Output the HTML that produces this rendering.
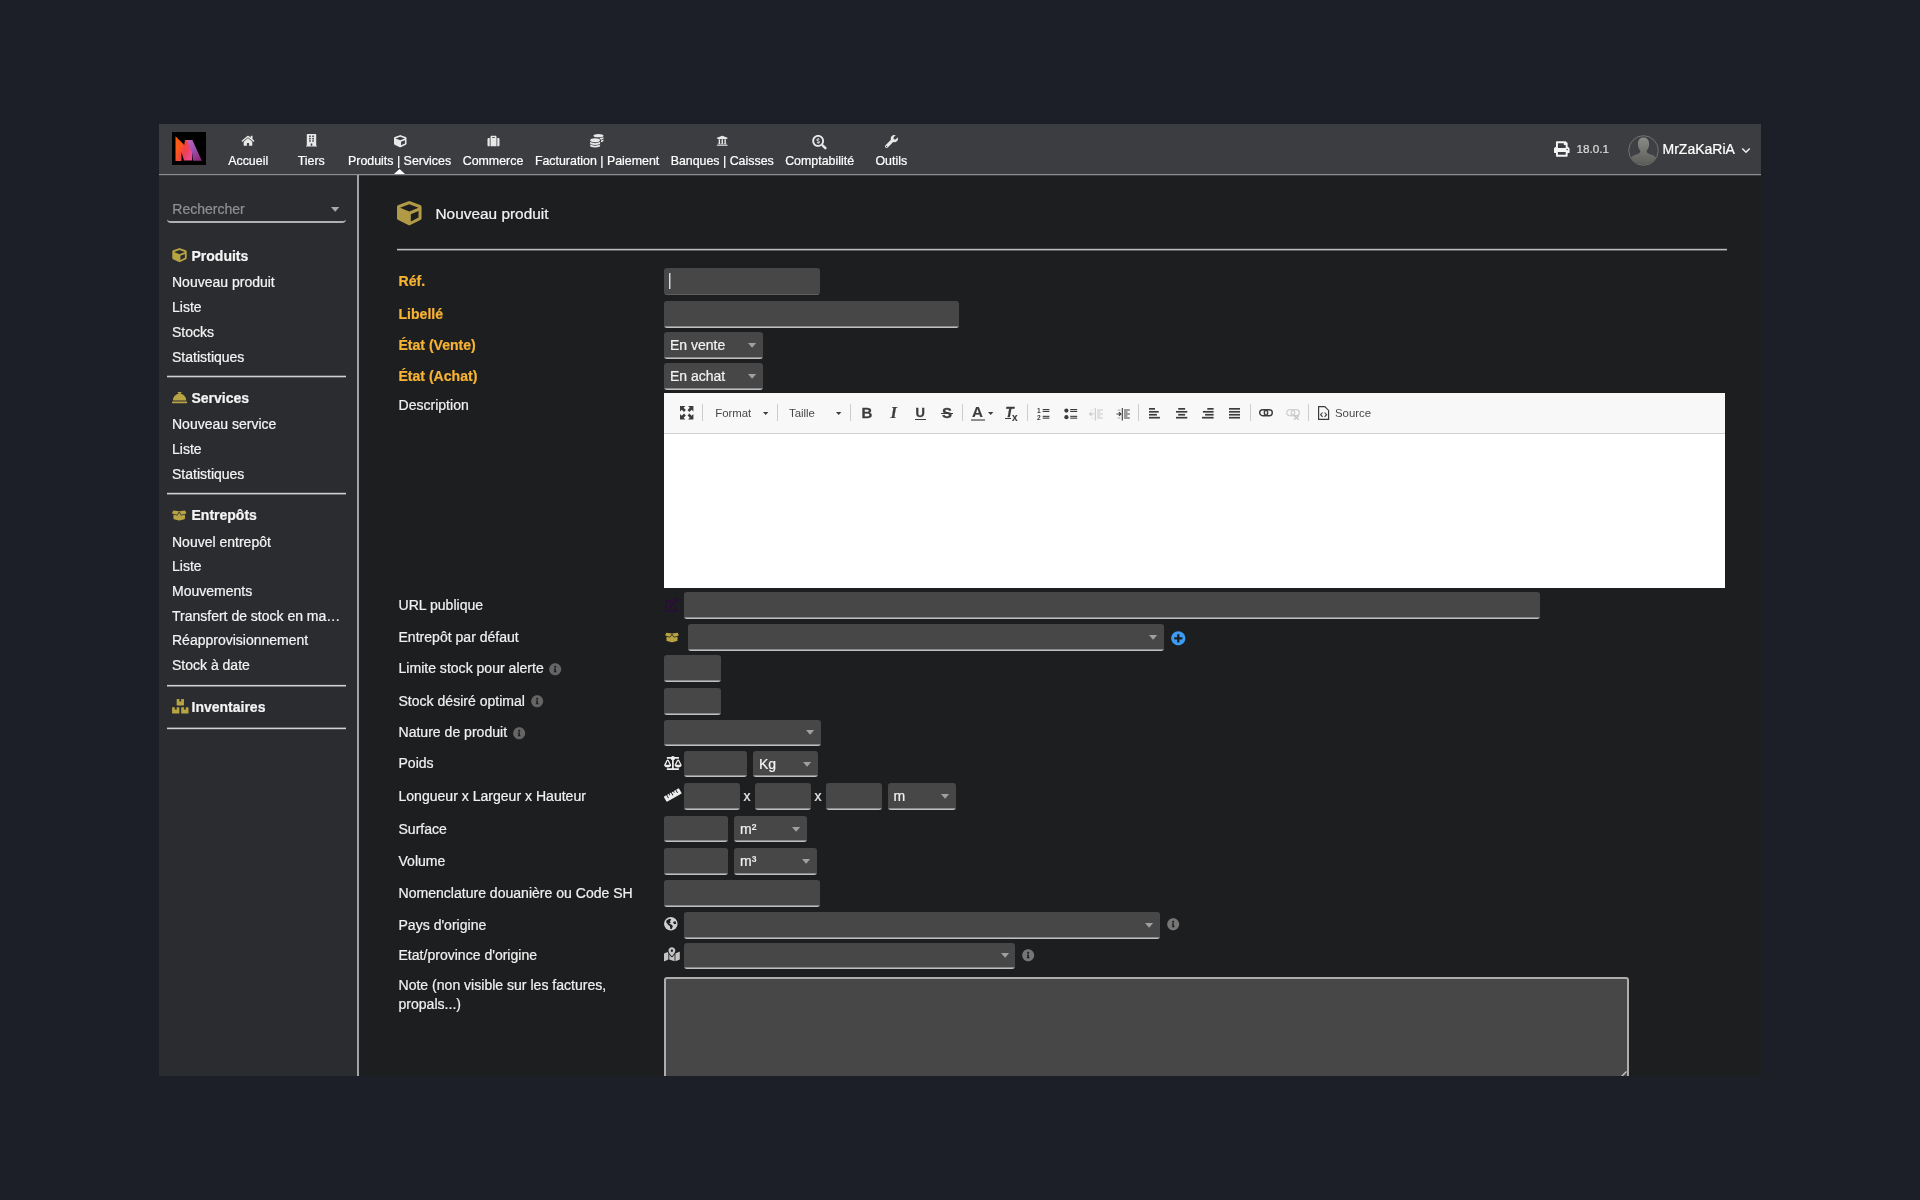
<!DOCTYPE html>
<html lang="fr"><head><meta charset="utf-8"><title>Nouveau produit</title>
<style>
*{box-sizing:border-box;margin:0;padding:0}
html,body{width:1920px;height:1200px;overflow:hidden}
body{background:#1c1e28;font-family:"Liberation Sans",Arial,sans-serif;font-size:14px;color:#f0f0f0;position:relative;-webkit-text-stroke:0.22px currentColor}
.abs{position:absolute}
svg{display:block;overflow:visible}
#frame{position:absolute;left:159px;top:124px;width:1602px;height:952px;background:#1d1e20;overflow:hidden}
#wrap{position:absolute;left:-159px;top:-124px;width:1920px;height:1200px;will-change:transform}
#topbar{position:absolute;left:159px;top:124px;width:1602px;height:50px;background:#3c3d40}
#topline{position:absolute;left:159px;top:174px;width:1602px;height:2px;background:linear-gradient(#8d8e90 0,#8d8e90 50%,#3c3d40 50%,#3c3d40 100%)}
#side{position:absolute;left:159px;top:176px;width:198px;height:900px;background:#2b2c30}
#sideline{position:absolute;left:357px;top:175px;width:2px;height:901px;background:#a3a4a7}
.nav{position:absolute;top:154px;font-size:12.4px;color:#fff;white-space:nowrap;transform:translateX(-50%);line-height:14px}
.t{position:absolute;white-space:nowrap;line-height:16px}
.sl{left:172px;color:#f4f4f4}
.sh{left:191.5px;font-weight:bold;color:#f4f4f4}
.hr{position:absolute;left:167px;width:179px;height:2px;background:#c4c5c7}
.lb{left:398.5px;color:#f0f0f0;font-size:14.05px}
.req{color:#f7b334;font-weight:bold}
.in{position:absolute;background:linear-gradient(to top,#c0c0c0 0,#c0c0c0 1px,#8a8a8a 1px,#8a8a8a 2px,#474747 2px);border-radius:3px}
.sel{position:absolute;background:linear-gradient(to top,#c0c0c0 0,#c0c0c0 1px,#8a8a8a 1px,#8a8a8a 2px,#474747 2px);border-radius:3px;font-size:14px;line-height:16px;color:#f2f2f2;white-space:nowrap}
.sel span{position:absolute;left:6px;top:5px}
.car{position:absolute;width:0;height:0;border-left:4.6px solid transparent;border-right:4.6px solid transparent;border-top:5px solid #a9a9a9}
.ck{-webkit-text-stroke:0;position:absolute;font-size:11.4px;color:#484848;line-height:14px;white-space:nowrap}
.sep{position:absolute;top:404px;width:1px;height:17px;background:#cdcdcd}
</style></head><body>
<div id="frame"><div id="wrap">
<div id="topbar"></div><div id="side"></div><div id="topline"></div><div id="sideline"></div>
<svg class="abs" style="left:172px;top:132px" width="34" height="33" viewBox="0 0 34 33"><defs><linearGradient id="lg1" gradientUnits="userSpaceOnUse" x1="7" y1="12" x2="20" y2="17"><stop offset="0" stop-color="#ff5a14"/><stop offset="0.45" stop-color="#f2443e"/><stop offset="0.75" stop-color="#ee3e68"/><stop offset="1" stop-color="#ea4c86"/></linearGradient><linearGradient id="lg3" gradientUnits="userSpaceOnUse" x1="15" y1="8" x2="27" y2="28"><stop offset="0" stop-color="#c662b6"/><stop offset="0.45" stop-color="#9a56b2"/><stop offset="1" stop-color="#922a80"/></linearGradient></defs><rect width="34" height="33" fill="#000"/><path d="M3.5 4.25 L12.25 13.0 L13.0 8.0 L16.0 8.0 L20.12 19.5 L20.05 28.55 L12.0 28.55 L9.5 20.0 L9.5 28.88 L3.5 28.88Z" fill="url(#lg1)"/><path d="M14.5 8.0 L20.38 8.0 L29.75 28.75 L21.05 28.75 L20.05 20.62Z" fill="url(#lg3)"/></svg>
<svg class="abs" style="left:241px;top:134.5px" width="14" height="11.5" viewBox="0 0 576 512" ><path fill="#e8e8e8" d="M280.37 148.26L96 300.11V464a16 16 0 0 0 16 16l112.06-.29a16 16 0 0 0 15.92-16V368a16 16 0 0 1 16-16h64a16 16 0 0 1 16 16v95.64a16 16 0 0 0 16 16.05L464 480a16 16 0 0 0 16-16V300L295.67 148.26a12.19 12.19 0 0 0-15.3 0zM571.6 251.47L488 182.56V44.05a12 12 0 0 0-12-12h-56a12 12 0 0 0-12 12v72.61L318.47 43a48 48 0 0 0-61 0L4.34 251.47a12 12 0 0 0-1.6 16.9l25.5 31A12 12 0 0 0 45.15 301l235.22-193.74a12.19 12.19 0 0 1 15.3 0L530.9 301a12 12 0 0 0 16.9-1.6l25.5-31a12 12 0 0 0-1.7-16.93z"/></svg>
<div class="nav" style="left:248.2px">Accueil</div>
<svg class="abs" style="left:305.8px;top:134.2px" width="11" height="12.6" viewBox="0 0 448 512" ><path fill="#e8e8e8" d="M436 480h-20V24c0-13.255-10.745-24-24-24H56C42.745 0 32 10.745 32 24v456H12c-6.627 0-12 5.373-12 12v20h448v-20c0-6.627-5.373-12-12-12zM128 76c0-6.627 5.373-12 12-12h40c6.627 0 12 5.373 12 12v40c0 6.627-5.373 12-12 12h-40c-6.627 0-12-5.373-12-12V76zm0 96c0-6.627 5.373-12 12-12h40c6.627 0 12 5.373 12 12v40c0 6.627-5.373 12-12 12h-40c-6.627 0-12-5.373-12-12v-40zm52 148h-40c-6.627 0-12-5.373-12-12v-40c0-6.627 5.373-12 12-12h40c6.627 0 12 5.373 12 12v40c0 6.627-5.373 12-12 12zm76 160h-64v-84c0-6.627 5.373-12 12-12h40c6.627 0 12 5.373 12 12v84zm64-172c0 6.627-5.373 12-12 12h-40c-6.627 0-12-5.373-12-12v-40c0-6.627 5.373-12 12-12h40c6.627 0 12 5.373 12 12v40zm0-96c0 6.627-5.373 12-12 12h-40c-6.627 0-12-5.373-12-12v-40c0-6.627 5.373-12 12-12h40c6.627 0 12 5.373 12 12v40zm0-96c0 6.627-5.373 12-12 12h-40c-6.627 0-12-5.373-12-12V76c0-6.627 5.373-12 12-12h40c6.627 0 12 5.373 12 12v40z"/></svg>
<div class="nav" style="left:311.2px">Tiers</div>
<svg class="abs" style="left:393.5px;top:134.5px" width="12.5" height="12.5" viewBox="0 0 512 512" ><path fill="#e8e8e8" d="M239.1 6.3l-208 78c-18.700 7-31.100 25-31.100 45v225.100c0 18.200 10.300 34.800 26.500 42.900l208 104c13.500 6.800 29.400 6.800 42.900 0l208-104c16.300-8.100 26.500-24.800 26.500-42.900V129.300c0-20-12.400-37.900-31.100-44.900l-208-78C262 2.200 250 2.200 239.100 6.300zM256 68.400l192 72v1.100l-192 78-192-78v-1.100l192-72zm32 356V275.500l160-65v133.900l-160 80z"/></svg>
<div class="nav" style="left:399.6px">Produits | Services</div>
<svg class="abs" style="left:486.6px;top:134.6px" width="13" height="12" viewBox="0 0 512 512" ><path fill="#e8e8e8" d="M128 480h256V80c0-26.500-21.500-48-48-48H176c-26.500 0-48 21.500-48 48v400zm64-384h128v32H192V96zm320 80v256c0 26.500-21.500 48-48 48h-48V128h48c26.500 0 48 21.500 48 48zM96 480H48c-26.500 0-48-21.500-48-48V176c0-26.500 21.500-48 48-48h48v352z"/></svg>
<div class="nav" style="left:493px">Commerce</div>
<svg class="abs" style="left:590.3px;top:133.8px" width="13.6" height="13.4" viewBox="0 0 512 512" ><path fill="#e8e8e8" d="M0 405.300V448c0 35.300 86 64 192 64s192-28.700 192-64v-42.700C342.700 434.400 267.200 448 192 448S41.300 434.400 0 405.300zM320 128c106 0 192-28.700 192-64S426 0 320 0 128 28.700 128 64s86 64 192 64zM0 300.400V352c0 35.300 86 64 192 64s192-28.700 192-64v-51.600c-41.300 34-116.900 51.600-192 51.600S41.300 334.400 0 300.400zm416 11c57.300-11.100 96-31.700 96-55.400v-42.700c-23.200 16.400-57.300 27.600-96 34.500v63.600zM192 160C86 160 0 195.800 0 240s86 80 192 80 192-35.800 192-80-86-80-192-80zm219.300 56.300c60-10.800 100.700-32 100.700-56.300v-42.700c-35.500 25.100-96.500 38.600-160.700 41.800 29.500 14.300 51.200 33.500 60 57.200z"/></svg>
<div class="nav" style="left:597.1px">Facturation | Paiement</div>
<svg class="abs" style="left:716px;top:135px" width="12.5" height="11.5" viewBox="0 0 512 512" ><path fill="#e8e8e8" d="M496 128v16a8 8 0 0 1-8 8h-24v12c0 6.627-5.373 12-12 12H60c-6.627 0-12-5.373-12-12v-12H24a8 8 0 0 1-8-8v-16a8 8 0 0 1 4.941-7.392l232-88a7.996 7.996 0 0 1 6.118 0l232 88A8 8 0 0 1 496 128zm-24 304H40c-13.255 0-24 10.745-24 24v16a8 8 0 0 0 8 8h464a8 8 0 0 0 8-8v-16c0-13.255-10.745-24-24-24zM96 192v192H60c-6.627 0-12 5.373-12 12v20h416v-20c0-6.627-5.373-12-12-12h-36V192h-64v192h-64V192h-64v192h-64V192H96z"/></svg>
<div class="nav" style="left:722.2px">Banques | Caisses</div>
<svg class="abs" style="left:811.7px;top:134.6px" width="15" height="14.5" viewBox="0 0 512 512" ><path fill="#e8e8e8" d="M505.040 442.660l-99.710-99.690c-4.500-4.500-10.600-7-17-7h-16.300c27.600-35.300 44-79.690 44-127.990C416.030 93.090 322.920 0 208.020 0S0 93.090 0 207.980s93.110 207.980 208.020 207.980c48.300 0 92.710-16.400 128.010-44v16.300c0 6.400 2.500 12.500 7 17l99.710 99.690c9.400 9.400 24.600 9.400 33.900 0l28.300-28.300c9.400-9.400 9.400-24.590.1-33.990zm-297.020-90.700c-79.540 0-144-64.340-144-143.980 0-79.530 64.350-143.980 144-143.980 79.540 0 144 64.340 144 143.980 0 79.530-64.350 143.980-144 143.980zm27.110-152.540l-45.010-13.500c-5.160-1.550-8.770-6.780-8.770-12.730 0-7.270 5.300-13.190 11.800-13.190h28.110c4.560 0 8.960 1.290 12.820 3.720 3.240 2.030 7.360 1.910 10.130-.73l11.750-11.210c3.530-3.370 3.330-9.210-.57-12.140-9.100-6.830-20.080-10.770-31.370-11.350V112c0-4.420-3.580-8-8-8h-16c-4.420 0-8 3.580-8 8v16.120c-23.630.63-42.680 20.550-42.680 45.070 0 19.970 12.990 37.810 31.580 43.390l45.010 13.500c5.160 1.550 8.770 6.780 8.770 12.730 0 7.270-5.300 13.190-11.800 13.190h-28.100c-4.560 0-8.960-1.290-12.820-3.720-3.240-2.030-7.360-1.910-10.130.73l-11.750 11.210c-3.530 3.370-3.330 9.210.57 12.140 9.100 6.830 20.080 10.770 31.370 11.350V304c0 4.420 3.580 8 8 8h16c4.420 0 8-3.580 8-8v-16.120c23.630-.63 42.680-20.540 42.680-45.070 0-19.970-12.990-37.810-31.590-43.390z"/></svg>
<div class="nav" style="left:819.6px">Comptabilité</div>
<svg class="abs" style="left:884.8px;top:134.5px" width="13" height="13" viewBox="0 0 512 512" ><path fill="#e8e8e8" d="M507.730 109.100c-2.240-9.030-13.540-12.090-20.120-5.510l-74.360 74.360-67.880-11.310-11.310-67.880 74.360-74.360c6.620-6.620 3.430-17.900-5.660-20.160-47.380-11.740-99.550.91-136.580 37.930-39.640 39.640-50.550 97.100-34.050 147.200L18.740 402.760c-24.990 24.990-24.990 65.510 0 90.500 24.990 24.990 65.510 24.990 90.500 0l213.210-213.210c50.120 16.710 107.470 5.680 147.370-34.220 37.070-37.070 49.700-89.320 37.910-136.730zM64 472c-13.250 0-24-10.750-24-24 0-13.260 10.750-24 24-24s24 10.740 24 24c0 13.250-10.750 24-24 24z"/></svg>
<div class="nav" style="left:891.3px">Outils</div>
<svg class="abs" style="left:394px;top:169px" width="11" height="5" viewBox="0 0 11 5"><path d="M0 5 L5.5 0 L11 5 Z" fill="#fff"/></svg>
<svg class="abs" style="left:1553.8px;top:141px" width="15.6" height="16" viewBox="0 0 512 512" ><path fill="#f4f4f4" d="M448 192V77.250c0-8.490-3.370-16.620-9.370-22.630L393.370 9.370c-6-6-14.140-9.370-22.630-9.370H96C78.330 0 64 14.330 64 32v160c-35.350 0-64 28.650-64 64v112c0 8.840 7.160 16 16 16h48v96c0 17.670 14.330 32 32 32h320c17.670 0 32-14.330 32-32v-96h48c8.840 0 16-7.160 16-16V256c0-35.350-28.650-64-64-64zm-64 256H128v-96h256v96zm0-224H128V64h192v48c0 8.840 7.160 16 16 16h48v96zm48 72c-13.250 0-24-10.750-24-24 0-13.260 10.750-24 24-24s24 10.740 24 24c0 13.250-10.750 24-24 24z"/></svg>
<div class="t" style="left:1576.5px;top:141px;font-size:11.7px;color:#dcdcdc">18.0.1</div>
<svg class="abs" style="left:1628px;top:134.5px" width="31" height="31" viewBox="0 0 31 31"><defs><linearGradient id="av" x1="0" y1="0" x2="0" y2="1"><stop offset="0" stop-color="#8a8a86"/><stop offset="1" stop-color="#5a5a56"/></linearGradient><clipPath id="avc"><circle cx="15.5" cy="15.500" r="14.200"/></clipPath></defs><circle cx="15.5" cy="15.500" r="14.800" fill="#3f4043" stroke="#77787a" stroke-width="0.9"/><g clip-path="url(#avc)"><path d="M15.5 2.500c3.600 0 5.600 2.700 5.600 6.400 0 2.600-.9 5-2.300 6.300-.3 1.800.3 2.800 2 3.500l4.500 1.700c2 .8 3.200 2.300 3.600 4.600l.4 6h-27.600l.4-6c.4-2.300 1.600-3.800 3.600-4.600l4.500-1.700c1.700-.7 2.300-1.700 2-3.500-1.400-1.300-2.300-3.700-2.300-6.300 0-3.700 2-6.400 5.600-6.400z" fill="url(#av)"/></g></svg>
<div class="t" style="left:1662.5px;top:141px;color:#fff">MrZaKaRiA</div>
<svg class="abs" style="left:1741px;top:146.500px" width="10" height="7" viewBox="0 0 10 7"><path d="M1.300 1.500 L5 5.200 L8.700 1.500" fill="none" stroke="#f0f0f0" stroke-width="1.500"/></svg>
<div class="t" style="left:172.3px;top:201px;color:#8f9092">Rechercher</div>
<div class="abs" style="left:167px;top:196px;width:179px;height:27px;border-bottom:2px solid #aeb0b3;border-radius:0 0 4px 4px"></div>
<svg class="abs" style="left:331.2px;top:207.200px" width="8.400" height="4.800" viewBox="0 0 8.400 4.800"><path d="M0 0H8.400L4.200 4.800Z" fill="#a8a9ab"/></svg>
<svg class="abs" style="left:172px;top:248px" width="15" height="14.4" viewBox="0 0 512 512" ><path fill="#b9a443" d="M239.1 6.3l-208 78c-18.700 7-31.100 25-31.100 45v225.100c0 18.200 10.300 34.800 26.500 42.900l208 104c13.500 6.800 29.400 6.800 42.900 0l208-104c16.300-8.100 26.500-24.800 26.500-42.900V129.300c0-20-12.400-37.900-31.100-44.900l-208-78C262 2.200 250 2.200 239.100 6.300zM256 68.400l192 72v1.100l-192 78-192-78v-1.100l192-72zm32 356V275.500l160-65v133.900l-160 80z"/></svg>
<svg class="abs" style="left:172px;top:389.5px" width="15.2" height="15.2" viewBox="0 0 512 512" ><path fill="#b9a443" d="M288 130.540V112h16c8.840 0 16-7.160 16-16V80c0-8.840-7.160-16-16-16h-96c-8.840 0-16 7.160-16 16v16c0 8.840 7.160 16 16 16h16v18.540C115.490 146.110 32 239.180 32 352h448c0-112.820-83.490-205.890-192-221.460zM496 384H16c-8.840 0-16 7.160-16 16v32c0 8.840 7.160 16 16 16h480c8.840 0 16-7.160 16-16v-32c0-8.840-7.160-16-16-16z"/></svg>
<svg class="abs" style="left:172px;top:509.2px" width="14.4" height="13" viewBox="0 0 640 512" ><path fill="#b9a443" d="M425.700 256c-16.900 0-32.800-9-41.400-23.400L320 126l-64.200 106.600c-8.700 14.500-24.600 23.500-41.500 23.500-4.500 0-9-.6-13.300-1.900L64 215v178c0 14.700 10 27.500 24.200 31l216.200 54.100c10.200 2.500 20.900 2.500 31 0L551.800 424c14.200-3.600 24.200-16.400 24.200-31V215l-137 39.100c-4.300 1.300-8.800 1.900-13.300 1.900zm212.600-112.200L586.800 41c-3.100-6.200-9.800-9.800-16.700-8.900L320 64l91.700 152.100c3.800 6.300 11.400 9.300 18.500 7.300l197.900-56.500c9.900-2.900 14.700-13.900 10.200-23.100zM53.200 41L1.700 143.800c-4.600 9.200.3 20.200 10.100 23l197.900 56.500c7.100 2 14.700-1 18.500-7.300L320 64 69.800 32.100c-6.900-.8-13.500 2.700-16.600 8.900z"/></svg>
<svg class="abs" style="left:171.8px;top:699px" width="16.6" height="14.6" viewBox="0 0 576 512" ><path fill="#b9a443" d="M560 288h-80v96l-32-21.300-32 21.300v-96h-80c-8.800 0-16 7.200-16 16v192c0 8.800 7.200 16 16 16h224c8.800 0 16-7.200 16-16V304c0-8.800-7.200-16-16-16zm-384-64h224c8.800 0 16-7.200 16-16V16c0-8.800-7.200-16-16-16h-80v96l-32-21.300L256 96V0h-80c-8.800 0-16 7.200-16 16v192c0 8.800 7.200 16 16 16zm64 64h-80v96l-32-21.300L96 384v-96H16c-8.800 0-16 7.200-16 16v192c0 8.800 7.200 16 16 16h224c8.800 0 16-7.200 16-16V304c0-8.800-7.200-16-16-16z"/></svg>
<div class="t sh" style="top:248px">Produits</div>
<div class="t sh" style="top:390px">Services</div>
<div class="t sh" style="top:507px">Entrepôts</div>
<div class="t sh" style="top:699px">Inventaires</div>
<div class="t sl" style="top:274px">Nouveau produit</div>
<div class="t sl" style="top:299px">Liste</div>
<div class="t sl" style="top:324px">Stocks</div>
<div class="t sl" style="top:349px">Statistiques</div>
<div class="t sl" style="top:416px">Nouveau service</div>
<div class="t sl" style="top:441px">Liste</div>
<div class="t sl" style="top:466px">Statistiques</div>
<div class="t sl" style="top:534px">Nouvel entrepôt</div>
<div class="t sl" style="top:558px">Liste</div>
<div class="t sl" style="top:583px">Mouvements</div>
<div class="t sl" style="top:608px">Transfert de stock en ma…</div>
<div class="t sl" style="top:632px">Réapprovisionnement</div>
<div class="t sl" style="top:657px">Stock à date</div>
<div class="abs" style="left:166.5px;top:375px;width:179.5px;height:3px;background:linear-gradient(rgba(208,209,212,0.3) 0px,rgba(208,209,212,0.3) 1px,rgba(208,209,212,1) 1px,rgba(208,209,212,1) 2px,rgba(208,209,212,0.3) 2px,rgba(208,209,212,0.3) 3px)"></div>
<div class="abs" style="left:166.5px;top:492px;width:179.5px;height:3px;background:linear-gradient(rgba(208,209,212,0.2) 0px,rgba(208,209,212,0.2) 1px,rgba(208,209,212,1) 1px,rgba(208,209,212,1) 2px,rgba(208,209,212,0.4) 2px,rgba(208,209,212,0.4) 3px)"></div>
<div class="abs" style="left:166.5px;top:684px;width:179.5px;height:3px;background:linear-gradient(rgba(208,209,212,0.1) 0px,rgba(208,209,212,0.1) 1px,rgba(208,209,212,1) 1px,rgba(208,209,212,1) 2px,rgba(208,209,212,0.5) 2px,rgba(208,209,212,0.5) 3px)"></div>
<div class="abs" style="left:166.5px;top:727px;width:179.5px;height:3px;background:linear-gradient(rgba(208,209,212,0.4) 0px,rgba(208,209,212,0.4) 1px,rgba(208,209,212,1) 1px,rgba(208,209,212,1) 2px,rgba(208,209,212,0.2) 2px,rgba(208,209,212,0.2) 3px)"></div>
<svg class="abs" style="left:397px;top:200.6px" width="24.6" height="24.6" viewBox="0 0 512 512" ><path fill="#b09a45" d="M239.1 6.3l-208 78c-18.700 7-31.100 25-31.100 45v225.100c0 18.200 10.300 34.800 26.500 42.900l208 104c13.500 6.800 29.400 6.800 42.900 0l208-104c16.300-8.100 26.500-24.800 26.500-42.900V129.300c0-20-12.400-37.900-31.100-44.900l-208-78C262 2.200 250 2.200 239.100 6.300zM256 68.400l192 72v1.100l-192 78-192-78v-1.100l192-72zm32 356V275.500l160-65v133.900l-160 80z"/></svg>
<div class="t" style="left:435.5px;top:205px;font-size:15.4px;line-height:18px;color:#f2f2f2">Nouveau produit</div>
<div class="abs" style="left:396.5px;top:248px;width:1330.5px;height:3px;background:linear-gradient(rgba(188,189,191,0.2) 0px,rgba(188,189,191,0.2) 1px,rgba(188,189,191,1) 1px,rgba(188,189,191,1) 2px,rgba(188,189,191,0.4) 2px,rgba(188,189,191,0.4) 3px)"></div>
<div class="t lb req" style="top:273px">Réf.</div>
<div class="t lb req" style="top:306px">Libellé</div>
<div class="t lb req" style="top:337px">État (Vente)</div>
<div class="t lb req" style="top:368px">État (Achat)</div>
<div class="t lb" style="top:397px">Description</div>
<div class="t lb" style="top:597px">URL publique</div>
<div class="t lb" style="top:629px">Entrepôt par défaut</div>
<div class="t lb" style="top:660px">Limite stock pour alerte</div>
<div class="t lb" style="top:693px">Stock désiré optimal</div>
<div class="t lb" style="top:724px">Nature de produit</div>
<div class="t lb" style="top:755px">Poids</div>
<div class="t lb" style="top:788px">Longueur x Largeur x Hauteur</div>
<div class="t lb" style="top:821px">Surface</div>
<div class="t lb" style="top:853px">Volume</div>
<div class="t lb" style="top:885px">Nomenclature douanière ou Code SH</div>
<div class="t lb" style="top:917px">Pays d'origine</div>
<div class="t lb" style="top:947px">Etat/province d'origine</div>
<div class="t lb" style="top:977px">Note (non visible sur les factures,</div>
<div class="t lb" style="top:996px">propals...)</div>
<div class="in" style="left:664px;top:268px;width:156px;height:27px;background:linear-gradient(to top,#606060 0,#606060 1px,#474747 1px)"></div>
<div class="abs" style="left:669px;top:273px;width:1.500px;height:16px;background:linear-gradient(90deg,#dcdcdc 0,#dcdcdc 66%,#8a8a8a 66%)"></div>
<div class="in" style="left:664px;top:301px;width:295px;height:27px"></div>
<div class="sel" style="left:664px;top:332px;width:99px;height:27px"><span>En vente</span></div>
<svg class="abs" style="left:747.9px;top:343.2px" width="8.200" height="4.800" viewBox="0 0 8.200 4.800"><path d="M0 0H8.200L4.100 4.800Z" fill="#a0a0a0"/></svg>
<div class="sel" style="left:664px;top:363px;width:99px;height:26.5px"><span>En achat</span></div>
<svg class="abs" style="left:747.9px;top:373.9px" width="8.200" height="4.800" viewBox="0 0 8.200 4.800"><path d="M0 0H8.200L4.100 4.800Z" fill="#a0a0a0"/></svg>
<div class="abs" style="left:664px;top:393px;width:1061px;height:194.500px;background:#fff"></div>
<div class="abs" style="left:664px;top:393px;width:1061px;height:40.500px;background:#f8f8f8;border-bottom:1px solid #d1d1d1"></div>
<svg class="abs" style="left:679.8px;top:406.4px" width="13.4" height="13.5" viewBox="0 0 16 16"><g fill="#3c3c3c"><path id="mx" d="M0 0H6.400L4.300 2.100L7 4.800L4.800 7L2.100 4.300L0 6.400Z"/><use href="#mx" transform="translate(16 0) scale(-1 1)"/><use href="#mx" transform="translate(0 16) scale(1 -1)"/><use href="#mx" transform="translate(16 16) scale(-1 -1)"/></g></svg>
<div class="sep" style="left:702px"></div>
<div class="sep" style="left:777px"></div>
<div class="sep" style="left:850px"></div>
<div class="sep" style="left:962px"></div>
<div class="sep" style="left:1027px"></div>
<div class="sep" style="left:1138px"></div>
<div class="sep" style="left:1250px"></div>
<div class="sep" style="left:1308px"></div>
<div class="ck" style="left:715.2px;top:406px">Format</div>
<div class="ck" style="left:789px;top:406px">Taille</div>
<div class="ck" style="left:1335px;top:406px">Source</div>
<svg class="abs" style="left:763px;top:412px" width="5.400" height="3" viewBox="0 0 5.400 3"><path d="M0 0H5.400L2.700 3Z" fill="#3c3c3c"/></svg>
<svg class="abs" style="left:836.2px;top:412px" width="5.400" height="3" viewBox="0 0 5.400 3"><path d="M0 0H5.400L2.700 3Z" fill="#3c3c3c"/></svg>
<svg class="abs" style="left:988px;top:412px" width="5.400" height="3" viewBox="0 0 5.400 3"><path d="M0 0H5.400L2.700 3Z" fill="#3c3c3c"/></svg>
<div class="abs" style="left:861.6px;top:403.1px;font-size:15px;line-height:20px;font-weight:bold;color:#3c3c3c;-webkit-text-stroke:0.3px #3c3c3c;">B</div>
<div class="abs" style="left:890.6px;top:402.2px;font-size:16.5px;line-height:21px;font-family:'Liberation Serif',serif;font-weight:bold;color:#3c3c3c;-webkit-text-stroke:0.3px #3c3c3c;font-style:italic;-webkit-text-stroke:0.2px #3c3c3c">I</div>
<div class="abs" style="left:915.6px;top:403.9px;font-size:13px;line-height:17px;font-weight:bold;color:#3c3c3c;-webkit-text-stroke:0.3px #3c3c3c;">U</div>
<div class="abs" style="left:915.2px;top:418.7px;width:10.400px;height:1.300px;background:#3c3c3c"></div>
<div class="abs" style="left:942.1px;top:403.1px;font-size:15px;line-height:20px;font-weight:bold;color:#3c3c3c;-webkit-text-stroke:0.3px #3c3c3c;">S</div>
<div class="abs" style="left:941.2px;top:412.5px;width:12.200px;height:1.300px;background:#3c3c3c"></div>
<div class="abs" style="left:972.2px;top:403.6px;font-size:13.8px;line-height:18px;font-weight:bold;color:#3c3c3c;-webkit-text-stroke:0.3px #3c3c3c;transform:scaleX(1.1);transform-origin:0 0;-webkit-text-stroke:0.15px #3c3c3c">A</div>
<div class="abs" style="left:970.6px;top:419.1px;width:14.300px;height:1.500px;background:#8e8e8e"></div>
<div class="abs" style="left:1005.3px;top:403.6px;font-size:13.8px;line-height:18px;font-weight:bold;color:#3c3c3c;-webkit-text-stroke:0.3px #3c3c3c;font-style:italic">T</div>
<div class="abs" style="left:1004.6px;top:417.800px;width:6.400px;height:1.100px;background:#3c3c3c"></div>
<div class="abs" style="left:1011.9px;top:410.7px;font-size:10px;line-height:13px;font-weight:bold;color:#3c3c3c;-webkit-text-stroke:0.3px #3c3c3c;-webkit-text-stroke:0.1px #3c3c3c">x</div>
<svg class="abs" style="left:1036.5px;top:407.5px" width="12.600" height="12.600" viewBox="0 0 12.600 12.600"><g fill="#3c3c3c"><rect x="5.700" y="1" width="6.700" height="1.100"/><rect x="5.700" y="2.900" width="6.700" height="1.100"/><rect x="5.700" y="7.800" width="6.700" height="1.100"/><rect x="5.700" y="9.600" width="6.700" height="1.100"/></g></svg>
<div class="abs" style="left:1036.9px;top:406.0px;font-size:6.6px;line-height:9px;font-weight:bold;color:#3c3c3c;-webkit-text-stroke:0.3px #3c3c3c;-webkit-text-stroke:0">1</div>
<div class="abs" style="left:1036.9px;top:413.1px;font-size:6.6px;line-height:9px;font-weight:bold;color:#3c3c3c;-webkit-text-stroke:0.3px #3c3c3c;-webkit-text-stroke:0">2</div>
<svg class="abs" style="left:1063.5px;top:407.5px" width="13.400" height="12.600" viewBox="0 0 13.400 12.600"><g fill="#3c3c3c"><circle cx="2.400" cy="2.600" r="2.100"/><circle cx="2.400" cy="9.200" r="2.100"/><rect x="6.200" y="1" width="7" height="1.100"/><rect x="6.200" y="2.900" width="7" height="1.100"/><rect x="6.200" y="7.800" width="7" height="1.100"/><rect x="6.200" y="9.600" width="7" height="1.100"/></g></svg>
<svg class="abs" style="left:1089.3px;top:407.5px" width="14" height="12.400" viewBox="0 0 14 12.400"><g stroke="#c9c9c9" fill="none"><path d="M6.300 0V12.400" stroke-width="1.100"/><path d="M8 2H13.800M8 4H11.500M8 6H13.800M8 8H11.500M8 10H13.800" stroke-width="1"/><path d="M5 6H0.700M2.500 4.200L0.600 6L2.500 7.800" stroke-width="1.100"/><path d="M1.800 2.100H4.300M1.800 10H4.300" stroke-width="0.700" stroke-dasharray="0.800 0.800"/></g></svg>
<svg class="abs" style="left:1116.2px;top:407.5px" width="14" height="12.400" viewBox="0 0 14 12.400"><g stroke="#3c3c3c" fill="none"><path d="M6.300 0V12.400" stroke-width="1.100"/><path d="M8 2H13.800M8 4H11.500M8 6H13.800M8 8H11.500M8 10H13.800" stroke-width="1"/><path d="M0.500 6H4.800M3 4.200L4.900 6L3 7.800" stroke-width="1.100"/><path d="M1.800 2.100H4.300M1.800 10H4.300" stroke-width="0.700" stroke-dasharray="0.800 0.800"/></g></svg>
<svg class="abs" style="left:1149px;top:408.4px" width="12" height="10.600" viewBox="0 0 12 10.600"><g fill="#3c3c3c"><rect x="0" y="0.0" width="6" height="1.700"/><rect x="0" y="2.95" width="9.7" height="1.700"/><rect x="0" y="5.9" width="7.9" height="1.700"/><rect x="0" y="8.85" width="10.9" height="1.700"/></g></svg>
<svg class="abs" style="left:1175.6px;top:408.4px" width="12" height="10.600" viewBox="0 0 12 10.600"><g fill="#3c3c3c"><rect x="2.2" y="0.0" width="6.9" height="1.700"/><rect x="0" y="2.95" width="11.3" height="1.700"/><rect x="2.2" y="5.9" width="6.9" height="1.700"/><rect x="0" y="8.85" width="11.3" height="1.700"/></g></svg>
<svg class="abs" style="left:1202.2px;top:408.4px" width="12" height="10.600" viewBox="0 0 12 10.600"><g fill="#3c3c3c"><rect x="5.3" y="0.0" width="6.3" height="1.700"/><rect x="0.9" y="2.95" width="10.7" height="1.700"/><rect x="3.1" y="5.9" width="8.5" height="1.700"/><rect x="0" y="8.85" width="11.6" height="1.700"/></g></svg>
<svg class="abs" style="left:1229px;top:408.4px" width="12" height="10.600" viewBox="0 0 12 10.600"><g fill="#3c3c3c"><rect x="0" y="0.0" width="11" height="1.700"/><rect x="0" y="2.95" width="11" height="1.700"/><rect x="0" y="5.9" width="11" height="1.700"/><rect x="0" y="8.85" width="11" height="1.700"/></g></svg>
<svg class="abs" style="left:1259px;top:408.7px" width="14" height="7.400" viewBox="0 0 14 7.400"><g fill="none" stroke="#3c3c3c" stroke-width="1.400"><rect x="0.700" y="0.700" width="8" height="6" rx="3"/><rect x="5.300" y="0.700" width="8" height="6" rx="3"/></g></svg>
<svg class="abs" style="left:1286px;top:408.7px" width="14" height="11" viewBox="0 0 14 11"><g fill="none" stroke="#cfcfcf" stroke-width="1.300"><rect x="0.700" y="0.700" width="8" height="6" rx="3"/><rect x="5.300" y="0.700" width="8" height="6" rx="3"/><path d="M8 6.500L12.800 10.800M12.800 6.500L8 10.800" stroke="#c6c6c6"/></g></svg>
<svg class="abs" style="left:1318px;top:406px" width="11.200" height="14" viewBox="0 0 11.200 14"><path d="M0.600 0.600H6.800L10.600 4.400V13.400H0.600Z" fill="none" stroke="#3c3c3c" stroke-width="1.200"/><path d="M4.600 6.500L2.600 8.700L4.600 10.900M6.600 6.500L8.600 8.700L6.600 10.900" fill="none" stroke="#3c3c3c" stroke-width="1.100"/></svg>
<div class="in" style="left:684px;top:592px;width:856px;height:27px"></div>
<div class="sel" style="left:687.5px;top:624px;width:476.5px;height:26.5px"></div>
<svg class="abs" style="left:1149.4px;top:635.0px" width="8.200" height="4.800" viewBox="0 0 8.200 4.800"><path d="M0 0H8.200L4.100 4.800Z" fill="#a0a0a0"/></svg>
<div class="in" style="left:664px;top:655px;width:57px;height:27px"></div>
<div class="in" style="left:664px;top:688px;width:57px;height:26.5px"></div>
<div class="sel" style="left:664px;top:719.5px;width:157px;height:26.0px"></div>
<svg class="abs" style="left:806.2px;top:730.2px" width="8.200" height="4.800" viewBox="0 0 8.200 4.800"><path d="M0 0H8.200L4.100 4.800Z" fill="#a0a0a0"/></svg>
<div class="in" style="left:684px;top:751px;width:63px;height:26px"></div>
<div class="sel" style="left:753px;top:751px;width:65px;height:26px"><span>Kg</span></div>
<svg class="abs" style="left:803.1px;top:761.7px" width="8.200" height="4.800" viewBox="0 0 8.200 4.800"><path d="M0 0H8.200L4.100 4.800Z" fill="#a0a0a0"/></svg>
<div class="in" style="left:684px;top:783px;width:56px;height:26.5px"></div>
<div class="in" style="left:754.5px;top:783px;width:56.5px;height:26.5px"></div>
<div class="in" style="left:825.5px;top:783px;width:56.5px;height:26.5px"></div>
<div class="sel" style="left:887.5px;top:783px;width:68.5px;height:26.5px"><span>m</span></div>
<svg class="abs" style="left:941.2px;top:794.0px" width="8.200" height="4.800" viewBox="0 0 8.200 4.800"><path d="M0 0H8.200L4.100 4.800Z" fill="#a0a0a0"/></svg>
<div class="t" style="left:743.5px;top:788px;color:#e8e8e8">x</div><div class="t" style="left:814.5px;top:788px;color:#e8e8e8">x</div>
<div class="in" style="left:664px;top:816px;width:64px;height:26px"></div>
<div class="sel" style="left:734px;top:816px;width:73px;height:26px"><span>m²</span></div>
<svg class="abs" style="left:792.2px;top:826.7px" width="8.200" height="4.800" viewBox="0 0 8.200 4.800"><path d="M0 0H8.200L4.100 4.800Z" fill="#a0a0a0"/></svg>
<div class="in" style="left:664px;top:848px;width:64px;height:26.5px"></div>
<div class="sel" style="left:734px;top:848px;width:83px;height:26.5px"><span>m³</span></div>
<svg class="abs" style="left:802.2px;top:859.0px" width="8.200" height="4.800" viewBox="0 0 8.200 4.800"><path d="M0 0H8.200L4.100 4.800Z" fill="#a0a0a0"/></svg>
<div class="in" style="left:664px;top:880px;width:156px;height:26.5px"></div>
<div class="sel" style="left:684px;top:912px;width:476px;height:26.5px"></div>
<svg class="abs" style="left:1145.3px;top:923.0px" width="8.200" height="4.800" viewBox="0 0 8.200 4.800"><path d="M0 0H8.200L4.100 4.800Z" fill="#a0a0a0"/></svg>
<div class="sel" style="left:684px;top:942.5px;width:331px;height:26.0px"></div>
<svg class="abs" style="left:1000.6px;top:953.2px" width="8.200" height="4.800" viewBox="0 0 8.200 4.800"><path d="M0 0H8.200L4.100 4.800Z" fill="#a0a0a0"/></svg>
<div class="abs" style="left:664px;top:977px;width:965px;height:110px;background:#474747;border:2px solid #adadad;border-radius:3px"></div>
<svg class="abs" style="left:1619px;top:1069px" width="8" height="8" viewBox="0 0 8 8"><path d="M2.500 7.500L7.500 2.500" stroke="#c8c8c8" stroke-width="1.200"/></svg>
<svg class="abs" style="left:664.5px;top:597.5px" width="13.5" height="14" viewBox="0 0 512 512" ><path fill="#2b0d3c" d="M432 320h-32c-8.800 0-16 7.200-16 16v112H64V128h144c8.800 0 16-7.200 16-16V80c0-8.800-7.200-16-16-16H48C21.500 64 0 85.500 0 112v352c0 26.500 21.500 48 48 48h352c26.500 0 48-21.500 48-48V336c0-8.800-7.200-16-16-16zM488 0H360c-21.370 0-32.050 25.910-17 41l35.730 35.730L135 320.370c-9.360 9.360-9.360 24.570 0 33.940l22.670 22.670c9.360 9.360 24.570 9.360 33.940 0l243.610-243.680L471 169c15 15 41 4.500 41-17V24c0-13.250-10.750-24-24-24z"/></svg>
<svg class="abs" style="left:665px;top:631.5px" width="14" height="11" viewBox="0 0 640 512" ><path fill="#b9a443" d="M425.700 256c-16.900 0-32.800-9-41.400-23.400L320 126l-64.200 106.600c-8.700 14.500-24.600 23.500-41.500 23.500-4.500 0-9-.6-13.300-1.900L64 215v178c0 14.700 10 27.500 24.200 31l216.200 54.100c10.200 2.500 20.900 2.500 31 0L551.800 424c14.200-3.600 24.200-16.400 24.200-31V215l-137 39.100c-4.300 1.300-8.800 1.900-13.300 1.900zm212.600-112.200L586.800 41c-3.100-6.200-9.800-9.800-16.700-8.900L320 64l91.700 152.100c3.800 6.300 11.400 9.300 18.500 7.300l197.900-56.500c9.900-2.900 14.700-13.900 10.200-23.100zM53.200 41L1.700 143.800c-4.600 9.200.3 20.200 10.100 23l197.900 56.500c7.100 2 14.700-1 18.500-7.300L320 64 69.800 32.100c-6.900-.8-13.500 2.700-16.600 8.900z"/></svg>
<svg class="abs" style="left:1171.3px;top:631px" width="14.6" height="14.6" viewBox="0 0 512 512" ><path fill="#3d9bf2" d="M256 8C119 8 8 119 8 256s111 248 248 248 248-111 248-248S393 8 256 8zm144 276c0 6.600-5.400 12-12 12h-92v92c0 6.600-5.400 12-12 12h-56c-6.600 0-12-5.400-12-12v-92h-92c-6.600 0-12-5.400-12-12v-56c0-6.600 5.400-12 12-12h92v-92c0-6.600 5.400-12 12-12h56c6.600 0 12 5.400 12 12v92h92c6.600 0 12 5.400 12 12v56z"/></svg>
<svg class="abs" style="left:549px;top:662.8px" width="12.4" height="12.4" viewBox="0 0 512 512" ><path fill="#656565" d="M256 8C119.043 8 8 119.083 8 256c0 136.997 111.043 248 248 248s248-111.003 248-248C504 119.083 392.957 8 256 8zm0 110c23.196 0 42 18.804 42 42s-18.804 42-42 42-42-18.804-42-42 18.804-42 42-42zm56 254c0 6.627-5.373 12-12 12h-88c-6.627 0-12-5.373-12-12v-24c0-6.627 5.373-12 12-12h12v-64h-12c-6.627 0-12-5.373-12-12v-24c0-6.627 5.373-12 12-12h64c6.627 0 12 5.373 12 12v100h12c6.627 0 12 5.373 12 12v24z"/></svg>
<svg class="abs" style="left:530.5px;top:695.2px" width="12.4" height="12.4" viewBox="0 0 512 512" ><path fill="#656565" d="M256 8C119.043 8 8 119.083 8 256c0 136.997 111.043 248 248 248s248-111.003 248-248C504 119.083 392.957 8 256 8zm0 110c23.196 0 42 18.804 42 42s-18.804 42-42 42-42-18.804-42-42 18.804-42 42-42zm56 254c0 6.627-5.373 12-12 12h-88c-6.627 0-12-5.373-12-12v-24c0-6.627 5.373-12 12-12h12v-64h-12c-6.627 0-12-5.373-12-12v-24c0-6.627 5.373-12 12-12h64c6.627 0 12 5.373 12 12v100h12c6.627 0 12 5.373 12 12v24z"/></svg>
<svg class="abs" style="left:512.5px;top:726.8px" width="12.4" height="12.4" viewBox="0 0 512 512" ><path fill="#656565" d="M256 8C119.043 8 8 119.083 8 256c0 136.997 111.043 248 248 248s248-111.003 248-248C504 119.083 392.957 8 256 8zm0 110c23.196 0 42 18.804 42 42s-18.804 42-42 42-42-18.804-42-42 18.804-42 42-42zm56 254c0 6.627-5.373 12-12 12h-88c-6.627 0-12-5.373-12-12v-24c0-6.627 5.373-12 12-12h12v-64h-12c-6.627 0-12-5.373-12-12v-24c0-6.627 5.373-12 12-12h64c6.627 0 12 5.373 12 12v100h12c6.627 0 12 5.373 12 12v24z"/></svg>
<svg class="abs" style="left:1167px;top:918.2px" width="12.4" height="12.4" viewBox="0 0 512 512" ><path fill="#767676" d="M256 8C119.043 8 8 119.083 8 256c0 136.997 111.043 248 248 248s248-111.003 248-248C504 119.083 392.957 8 256 8zm0 110c23.196 0 42 18.804 42 42s-18.804 42-42 42-42-18.804-42-42 18.804-42 42-42zm56 254c0 6.627-5.373 12-12 12h-88c-6.627 0-12-5.373-12-12v-24c0-6.627 5.373-12 12-12h12v-64h-12c-6.627 0-12-5.373-12-12v-24c0-6.627 5.373-12 12-12h64c6.627 0 12 5.373 12 12v100h12c6.627 0 12 5.373 12 12v24z"/></svg>
<svg class="abs" style="left:1021.7px;top:948.7px" width="12.4" height="12.4" viewBox="0 0 512 512" ><path fill="#767676" d="M256 8C119.043 8 8 119.083 8 256c0 136.997 111.043 248 248 248s248-111.003 248-248C504 119.083 392.957 8 256 8zm0 110c23.196 0 42 18.804 42 42s-18.804 42-42 42-42-18.804-42-42 18.804-42 42-42zm56 254c0 6.627-5.373 12-12 12h-88c-6.627 0-12-5.373-12-12v-24c0-6.627 5.373-12 12-12h12v-64h-12c-6.627 0-12-5.373-12-12v-24c0-6.627 5.373-12 12-12h64c6.627 0 12 5.373 12 12v100h12c6.627 0 12 5.373 12 12v24z"/></svg>
<svg class="abs" style="left:664.2px;top:755.9px" width="17.8" height="14" viewBox="0 0 640 512" ><path fill="#ededed" d="M256 336h-.02c0-16.180 1.340-8.730-85.050-181.510-17.650-35.290-68.190-35.360-85.870 0C-2.060 328.750.02 320.330.02 336H0c0 44.180 57.310 80 128 80s128-35.820 128-80zM128 176l72 144H56l72-144zm511.980 160c0-16.180 1.340-8.730-85.050-181.510-17.650-35.290-68.190-35.360-85.870 0-87.120 174.260-85.040 165.840-85.040 181.510H384c0 44.180 57.310 80 128 80s128-35.820 128-80h-.02zM440 320l72-144 72 144H440zm88 128H352V153.250c23.510-10.290 41.160-31.480 46.390-57.250H528c8.840 0 16-7.160 16-16V48c0-8.840-7.160-16-16-16H383.640C369.040 12.680 346.090 0 320 0s-49.040 12.680-63.640 32H112c-8.840 0-16 7.160-16 16v32c0 8.840 7.160 16 16 16h129.610c5.230 25.760 22.870 46.960 46.390 57.250V448H112c-8.840 0-16 7.160-16 16v32c0 8.840 7.160 16 16 16h416c8.840 0 16-7.160 16-16v-32c0-8.840-7.160-16-16-16z"/></svg>
<svg class="abs" style="left:664.1px;top:787.8px" width="17.6" height="14.2" viewBox="0 0 640 512" ><path fill="#ededed" d="M635.700 167.200L556.100 31.700c-8.800-15-28.300-20.100-43.500-11.500l-69 39.100L503.300 161c2.200 3.800.9 8.500-2.900 10.700l-13.800 7.800c-3.800 2.200-8.700.9-10.900-2.900L416 75l-55.200 31.300 27.900 47.400c2.200 3.800.9 8.500-2.900 10.700l-13.800 7.800c-3.800 2.200-8.700.9-10.900-2.900L333.200 122 278 153.300 337.800 255c2.200 3.700.9 8.500-2.900 10.700l-13.800 7.800c-3.800 2.200-8.700.9-10.900-2.900l-59.700-101.700-55.200 31.300 27.900 47.400c2.200 3.800.9 8.500-2.900 10.700l-13.800 7.800c-3.800 2.200-8.700.9-10.900-2.900l-27.900-47.500-55.200 31.300 59.700 101.700c2.200 3.700.9 8.500-2.900 10.700l-13.800 7.800c-3.800 2.200-8.700.9-10.900-2.900L84.900 262.900l-69 39.100C.7 310.700-4.600 329.800 4.200 344.800l79.600 135.600c8.800 15 28.300 20.100 43.500 11.500L624.100 210c15.200-8.600 20.400-27.800 11.600-42.800z"/></svg>
<svg class="abs" style="left:664.2px;top:947.2px" width="15.8" height="14.6" viewBox="0 0 576 512" ><path fill="#c4c4c4" d="M288 0c-69.590 0-126 56.410-126 126 0 56.260 82.350 158.800 113.900 196.020 6.390 7.540 17.820 7.540 24.200 0C331.650 284.800 414 182.260 414 126 414 56.410 357.590 0 288 0zm0 168c-23.200 0-42-18.800-42-42s18.800-42 42-42 42 18.800 42 42-18.800 42-42 42zM20.120 215.950A32.006 32.006 0 0 0 0 245.660v250.320c0 11.320 11.430 19.060 21.940 14.860L160 448V214.920c-8.840-15.980-16.070-31.540-21.250-46.420L20.120 215.950zM288 359.670c-14.070 0-27.380-6.180-36.510-16.960-19.660-23.200-40.570-49.620-59.490-76.720v182l192 64V266c-18.920 27.090-39.820 53.520-59.490 76.720-9.130 10.770-22.440 16.950-36.510 16.950zm266.060-198.510L416 224v288l139.880-55.950A31.996 31.996 0 0 0 576 426.340V176.020c0-11.320-11.430-19.060-21.940-14.860z"/></svg>
<svg class="abs" style="left:664.2px;top:917.2px" width="13.6" height="13.6" viewBox="0 0 16 16"><circle cx="8" cy="8" r="8" fill="#cfcfcf"/><path d="M3.200 3.800 L6.500 2 L8.600 3 L7 5 L8 6.500 L6 7.600 L9.500 9.500 L10.400 11 L9 14 L7.500 14 L7 11 L4.800 9 L2.500 6 Z M11 5.500 L13.500 5 L14.500 8 L12.500 8.500 L10.800 7 Z" fill="#1d1e20"/></svg>
</div></div></body></html>
